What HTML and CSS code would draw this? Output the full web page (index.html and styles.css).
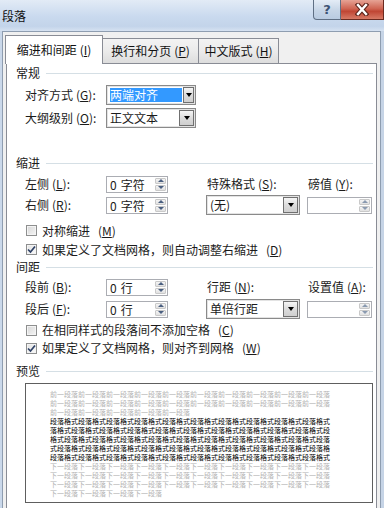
FILE: index.html
```html
<!DOCTYPE html>
<html lang="zh-CN">
<head>
<meta charset="utf-8">
<title>段落</title>
<link rel="stylesheet" href="styles.css">
</head>
<body>
<div class="window">
  <div class="titlebar">
    <span class="title">段落</span>
    <div class="caption">
      <div class="cap-btn help">?</div>
      <div class="cap-btn close">
        <svg width="14" height="13" viewBox="0 0 14 13"><path d="M3 2 L11 11 M11 2 L3 11" stroke="#5b2219" stroke-width="4.6" stroke-linecap="square"/><path d="M3 2 L11 11 M11 2 L3 11" stroke="#fff" stroke-width="2.4" stroke-linecap="square"/></svg>
      </div>
    </div>
  </div>
  <div class="frame">
    <div class="edge"></div>
    <div class="client">
      <div class="tabs">
        <div class="tab active">缩进和间距<span class="mn">(<u>I</u>)</span></div>
        <div class="tab t2">换行和分页<span class="mn">(<u>P</u>)</span></div>
        <div class="tab t3">中文版式<span class="mn">(<u>H</u>)</span></div>
      </div>
      <div class="panel">
        <div class="group-head h-general"><span>常规</span></div>
        <div class="grid g-general">
          <div class="lbl">对齐方式<span class="mn">(<u>G</u>)</span>:</div>
          <div class="combo c90"><div class="val"><span class="sel">两端对齐</span></div><div class="dd"></div></div>
          <div></div><div></div>
          <div class="lbl">大纲级别<span class="mn">(<u>O</u>)</span>:</div>
          <div class="combo c90"><div class="val">正文文本</div><div class="dd"></div></div>
          <div></div><div></div>
        </div>

        <div class="group-head h-indent"><span>缩进</span></div>
        <div class="grid g-indent">
          <div class="lbl">左侧<span class="mn">(<u>L</u>)</span>:</div>
          <div class="spin s62"><div class="val"><span class="num">0</span>字符</div><div class="arrows"><i class="up"></i><i class="down"></i></div></div>
          <div class="lbl l2">特殊格式<span class="mn">(<u>S</u>)</span>:</div>
          <div class="lbl l2">磅值<span class="mn">(<u>Y</u>)</span>:</div>
          <div class="lbl">右侧<span class="mn">(<u>R</u>)</span>:</div>
          <div class="spin s62"><div class="val"><span class="num">0</span>字符</div><div class="arrows"><i class="up"></i><i class="down"></i></div></div>
          <div class="combo c94"><div class="val">(无)</div><div class="dd"></div></div>
          <div class="spin s65 empty"><div class="val"></div><div class="arrows"><i class="up"></i><i class="down"></i></div></div>
        </div>
        <div class="checks c-indent">
          <div class="check"><span class="box"></span>对称缩进<span class="mn">(<u>M</u>)</span></div>
          <div class="check"><span class="box on"><svg width="9" height="9" viewBox="0 0 9 9"><path d="M1 4.5 L3.5 7 L8 1.5" fill="none" stroke="#2e4166" stroke-width="1.7"/></svg></span>如果定义了文档网格，则自动调整右缩进<span class="mn">(<u>D</u>)</span></div>
        </div>

        <div class="group-head h-spacing"><span>间距</span></div>
        <div class="grid g-spacing">
          <div class="lbl">段前<span class="mn">(<u>B</u>)</span>:</div>
          <div class="spin s62"><div class="val"><span class="num">0</span>行</div><div class="arrows"><i class="up"></i><i class="down"></i></div></div>
          <div class="lbl l2">行距<span class="mn">(<u>N</u>)</span>:</div>
          <div class="lbl l2">设置值<span class="mn">(<u>A</u>)</span>:</div>
          <div class="lbl">段后<span class="mn">(<u>F</u>)</span>:</div>
          <div class="spin s62"><div class="val"><span class="num">0</span>行</div><div class="arrows"><i class="up"></i><i class="down"></i></div></div>
          <div class="combo c94"><div class="val">单倍行距</div><div class="dd"></div></div>
          <div class="spin s65 empty"><div class="val"></div><div class="arrows"><i class="up"></i><i class="down"></i></div></div>
        </div>
        <div class="checks c-spacing">
          <div class="check"><span class="box"></span>在相同样式的段落间不添加空格<span class="mn">(<u>C</u>)</span></div>
          <div class="check"><span class="box on"><svg width="9" height="9" viewBox="0 0 9 9"><path d="M1 4.5 L3.5 7 L8 1.5" fill="none" stroke="#2e4166" stroke-width="1.7"/></svg></span>如果定义了文档网格，则对齐到网格<span class="mn">(<u>W</u>)</span></div>
        </div>

        <div class="group-head h-preview"><span>预览</span></div>
        <div class="preview">
          <div class="pl gray">前一段落前一段落前一段落前一段落前一段落前一段落前一段落前一段落前一段落前一段落</div>
          <div class="pl gray">前一段落前一段落前一段落前一段落前一段落前一段落前一段落前一段落前一段落前一段落</div>
          <div class="pl gray">前一段落前一段落前一段落前一段落前一段落</div>
          <div class="pl dark">段落格式段落格式段落格式段落格式段落格式段落格式段落格式段落格式段落格式段落格式</div>
          <div class="pl dark">落格式段落格式段落格式段落格式段落格式段落格式段落格式段落格式段落格式段落格式段</div>
          <div class="pl dark">格式段落格式段落格式段落格式段落格式段落格式段落格式段落格式段落格式段落格式段落</div>
          <div class="pl dark">式段落格式段落格式段落格式段落格式段落格式段落格式段落格式段落格式段落格式段落格</div>
          <div class="pl dark">段落格式段落格式段落格式段落格式段落格式段落格式段落格式段落格式段落格式段落格式</div>
          <div class="pl gray">下一段落下一段落下一段落下一段落下一段落下一段落下一段落下一段落下一段落下一段落</div>
          <div class="pl gray">下一段落下一段落下一段落下一段落下一段落下一段落下一段落下一段落下一段落下一段落</div>
          <div class="pl gray">下一段落下一段落下一段落下一段落下一段落下一段落下一段落下一段落下一段落下一段落</div>
          <div class="pl gray">下一段落下一段落下一段落下一段落</div>
        </div>
      </div>
    </div>
    <div class="edge edge-r"></div>
  </div>
</div>
</body>
</html>
```

FILE: styles.css
```css
* { box-sizing: border-box; }
html, body { margin: 0; padding: 0; }
body {
  width: 384px;
  height: 508px;
  overflow: hidden;
  font-family: "Noto Sans CJK SC", "Noto Sans", sans-serif;
  font-size: 12px;
  color: #1b1b1b;
  background: #cddbec;
}
.window { display: flex; flex-direction: column; height: 508px; }

.titlebar {
  height: 31px;
  flex: none;
  display: flex;
  align-items: flex-start;
  background: linear-gradient(to bottom, #e2ebf6 0%, #c9d9ee 55%, #c3d4ea 85%, #d6e2f1 100%);
}
.title { margin: 9px 0 0 2px; line-height: 14px; font-size: 12px; color: #111; }
.caption { margin-left: auto; display: flex; }
.cap-btn { height: 20px; display: flex; align-items: center; justify-content: center; }
.help {
  width: 28px;
  border: 1px solid #5f6f84;
  border-top: none;
  border-bottom-left-radius: 4px;
  background: linear-gradient(to bottom, #e4ecf6, #c6d5e7 55%, #b9cbe1);
  color: #3c5273;
  font-family: "DejaVu Sans", sans-serif;
  font-weight: bold;
  font-size: 13px;
  line-height: 18px;
}
.close {
  width: 43px;
  border: 1px solid #6b2a20;
  border-top: none;
  border-left: none;
  background: linear-gradient(to bottom, #e6a395, #cf6553 45%, #c04634 60%, #d77a66);
}

.frame { flex: 1; display: flex; min-height: 0; }
.edge { width: 2px; flex: none; background: #cad8ea; }
.edge-r { width: 3px; background: #c6d4e6; }
.client {
  flex: 1;
  min-width: 0;
  background: #f0f0f0;
  border-top: 1px solid #8e9db0;
  border-left: 1px solid #8e9db0;
  border-right: 1px solid #8e9db0;
  padding: 3px 3px 0 3px;
  display: flex;
  flex-direction: column;
}

.tabs { display: flex; align-items: flex-end; height: 28px; flex: none; position: relative; z-index: 1; }
.tab {
  height: 25px;
  border: 1px solid #898c95;
  border-bottom: none;
  background: linear-gradient(to bottom, #f3f3f3, #ebebeb 50%, #dddddd);
  display: flex;
  align-items: center;
  justify-content: center;
  line-height: 14px;
  color: #111;
}
.tab.active {
  height: 29px;
  width: 98px;
  margin-left: -1px;
  margin-bottom: -1px;
  background: #fff;
  padding-bottom: 1px;
}
.tab.t2 { width: 97px; margin-left: -1px; }
.tab.t3 { width: 81px; margin-left: -1px; }
.mn { margin-left: 3px; }
.mn u { text-decoration-thickness: 1px; text-underline-offset: 1px; }

.panel {
  flex: 1;
  background: #fff;
  border: 1px solid #898c95;
  border-bottom: none;
  padding: 2px 3px 0 9px;
}

.group-head { display: flex; align-items: center; height: 14px; line-height: 14px; gap: 6px; }
.group-head::after { content: ""; flex: 1; height: 1px; background: #d5dfe5; }
.h-indent { margin-top: 28px; }
.h-spacing { margin-top: 1px; }
.h-preview { margin-top: 7px; }

.grid {
  display: grid;
  grid-template-columns: 81px 100px 101px 66px;
  margin-left: 9px;
  align-items: center;
}
.g-general { margin-top: 5px; grid-template-rows: 20px 20px; row-gap: 3px; }
.g-indent { margin-top: 4px; grid-template-rows: 20px 20px; row-gap: 1px; }
.g-spacing { margin-top: 3px; grid-template-rows: 20px 20px; row-gap: 2px; }
.lbl { line-height: 14px; white-space: nowrap; }
.lbl.l2 { padding-left: 1px; }

.combo {
  height: 20px;
  display: flex;
  border: 1px solid #8a8a8a;
  background: #fff;
  box-shadow: inset 0 0 0 1px #e3e3e3;
}
.c90 { width: 90px; }
.c94 { width: 94px; }
.combo .val { flex: 1; padding: 2px 0 0 3px; line-height: 14px; white-space: nowrap; }
.combo .sel { display: inline-block; width: 72px; background: #3399ff; color: #fff; line-height: 14px; }
.combo .dd {
  width: 15px;
  margin: 1px;
  border: 1px solid #707070;
  background: linear-gradient(to bottom, #f5f5f5, #dcdcdc 50%, #cfcfcf);
  display: flex;
  align-items: center;
  justify-content: center;
}
.combo .dd::after {
  content: "";
  border-left: 3.5px solid transparent;
  border-right: 3.5px solid transparent;
  border-top: 4px solid #000;
}

.spin {
  height: 17px;
  display: flex;
  border: 1px solid #abadb3;
  background: #fff;
}
.s62 { width: 62px; }
.s65 { width: 65px; }
.spin .val { flex: 1; padding-left: 3px; line-height: 15px; white-space: nowrap; }
.spin .num { margin-right: 4px; }
.spin .arrows { width: 11px; margin: 1px 1px 1px 0; display: flex; flex-direction: column; gap: 1px; }
.spin .arrows i {
  flex: 1;
  display: flex;
  align-items: center;
  justify-content: center;
  background: linear-gradient(to bottom, #f4f4f4, #e1e1e1);
  border: 1px solid #c9c9c9;
  border-radius: 1px;
}
.spin .arrows i::after { content: ""; border-left: 3px solid transparent; border-right: 3px solid transparent; }
.spin .arrows .up::after { border-bottom: 3px solid #4a5f80; }
.spin .arrows .down::after { border-top: 3px solid #4a5f80; }
.spin.empty .arrows .up::after { border-bottom-color: #8a9ab0; }
.spin.empty .arrows .down::after { border-top-color: #8a9ab0; }

.checks { padding-left: 10px; }
.c-indent { margin-top: 6px; }
.c-indent .check { height: 19px; }
.c-spacing { margin-top: 2px; }
.c-spacing .check { height: 18px; }
.check { display: flex; align-items: center; gap: 5px; line-height: 14px; white-space: nowrap; }
.box {
  width: 11px;
  height: 11px;
  flex: none;
  border: 1px solid #8e8f8f;
  background: linear-gradient(135deg, #d6d6d6, #f6f6f6);
  box-shadow: inset 0 0 0 1px #f4f4f4;
  display: flex;
  align-items: center;
  justify-content: center;
}
.box.on { background: linear-gradient(135deg, #e2e2e2, #fbfbfb); }

.preview {
  margin: 5px 0 0 9px;
  width: 348px;
  height: 120px;
  border: 1px solid #5e5e5e;
  padding: 6px 0 0 24px;
}
.pl {
  width: 283px;
  height: 9px;
  line-height: 9px;
  font-size: 7px;
  white-space: nowrap;
}
.pl.gray { color: #b2b2b2; }
.pl.dark { color: #000; }
```
